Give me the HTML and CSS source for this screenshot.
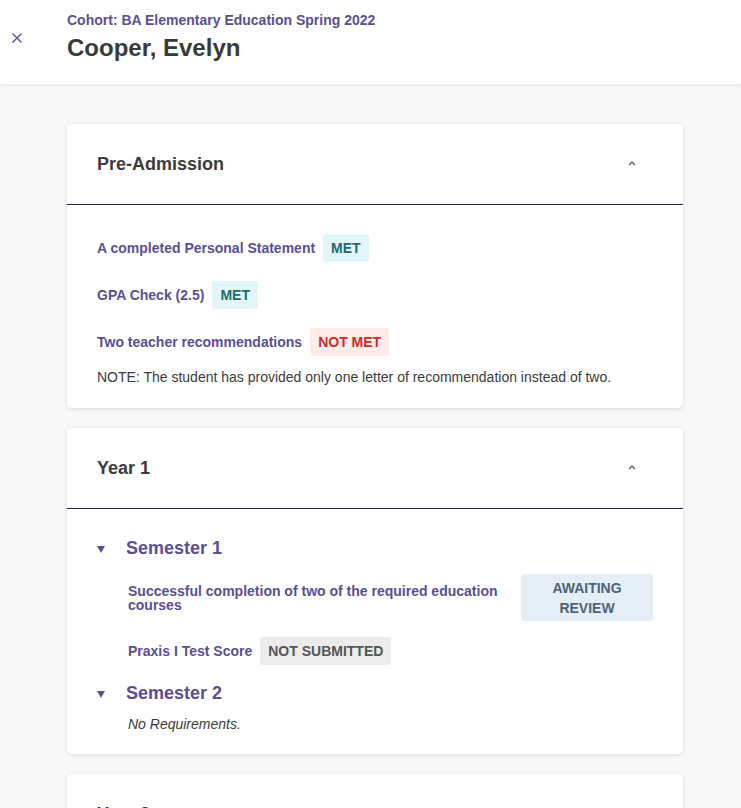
FILE: index.html
```html
<!DOCTYPE html>
<html>
<head>
<meta charset="utf-8">
<link rel="stylesheet" href="styles.css">
</head>
<body>
<header class="topbar">
  <button class="close" aria-label="Close">
    <svg width="12" height="12" viewBox="0 0 12 12"><path d="M1.5 1.5L10.5 10.5M10.5 1.5L1.5 10.5" stroke="#5b4f94" stroke-width="1.4" fill="none"/></svg>
  </button>
  <div class="titles">
    <div class="cohort">Cohort: BA Elementary Education Spring 2022</div>
    <h1 class="name">Cooper, Evelyn</h1>
  </div>
</header>
<main class="content">
  <section class="card">
    <div class="card-head">
      <h2>Pre-Admission</h2>
      <svg class="chev" width="10" height="6" viewBox="0 0 10 6"><path d="M2 5L5 2L8 5" stroke="#5b4f94" stroke-width="1.4" fill="none"/></svg>
    </div>
    <div class="card-body">
      <div class="req"><span class="label">A completed Personal Statement</span><span class="badge met">MET</span></div>
      <div class="req"><span class="label">GPA Check (2.5)</span><span class="badge met">MET</span></div>
      <div class="req"><span class="label">Two teacher recommendations</span><span class="badge notmet">NOT MET</span></div>
      <p class="note">NOTE: The student has provided only one letter of recommendation instead of two.</p>
    </div>
  </section>
  <section class="card">
    <div class="card-head">
      <h2>Year 1</h2>
      <svg class="chev" width="10" height="6" viewBox="0 0 10 6"><path d="M2 5L5 2L8 5" stroke="#5b4f94" stroke-width="1.4" fill="none"/></svg>
    </div>
    <div class="card-body sem-body">
      <div class="sem">
        <div class="sem-head"><span class="tri"></span><h3>Semester 1</h3></div>
        <div class="sem-items">
          <div class="sreq wide"><span class="label">Successful completion of two of the required education courses</span><span class="badge await">AWAITING REVIEW</span></div>
          <div class="sreq"><span class="label">Praxis I Test Score</span><span class="badge nosub">NOT SUBMITTED</span></div>
        </div>
      </div>
      <div class="sem">
        <div class="sem-head"><span class="tri"></span><h3>Semester 2</h3></div>
        <div class="sem-items">
          <p class="none">No Requirements.</p>
        </div>
      </div>
    </div>
  </section>
  <section class="card">
    <div class="card-head">
      <h2>Year 2</h2>
      <svg class="chev" width="10" height="6" viewBox="0 0 10 6"><path d="M2 5L5 2L8 5" stroke="#5b4f94" stroke-width="1.4" fill="none"/></svg>
    </div>
  </section>
</main>
</body>
</html>
```

FILE: styles.css
```css
* { box-sizing: border-box; }
html, body { margin: 0; padding: 0; }
body {
  background: #f8f8f8;
  font-family: "Liberation Sans", Arial, sans-serif;
  color: #3c3c3c;
  overflow: hidden;
  height: 808px;
}
.topbar {
  background: #fff;
  height: 84px;
  display: flex;
  align-items: flex-start;
  box-shadow: 0 1px 4px rgba(0,0,0,0.10);
  position: relative;
  z-index: 1;
}
.close {
  border: 0;
  background: none;
  padding: 0;
  margin: 32px 0 0 11px;
  width: 12px;
  height: 12px;
  display: flex;
}
.titles {
  margin-left: 44px;
  padding-top: 12px;
}
.cohort {
  font-size: 14px;
  font-weight: bold;
  color: #5b4f94;
  line-height: 17px;
}
.name {
  margin: 5px 0 0;
  font-size: 24px;
  line-height: 28px;
  font-weight: bold;
  color: #3a3a3a;
}
.content {
  padding: 40px 58px 0 67px;
  display: flex;
  flex-direction: column;
  gap: 20px;
}
.card {
  background: #fff;
  border-radius: 5px;
  box-shadow: 0 1px 4px rgba(0,0,0,0.12);
}
.card-head {
  height: 81px;
  border-bottom: 1px solid #2e1c4a;
  display: flex;
  align-items: center;
  justify-content: space-between;
  padding: 0 46px 0 30px;
}
.card-head h2 {
  margin: 0;
  font-size: 18px;
  font-weight: bold;
  color: #3c3c3c;
}
.chev { display: block; margin-top: -2px; }
.card-body {
  padding: 29px 30px 23px;
  display: flex;
  flex-direction: column;
}
.req {
  display: flex;
  align-items: center;
  gap: 8px;
  margin-bottom: 19px;
}
.req:nth-of-type(3) { margin-bottom: 13px; }
.label {
  font-size: 14px;
  font-weight: bold;
  color: #5b4f94;
}
.badge {
  font-size: 14px;
  font-weight: bold;
  padding: 5px 8px;
  border-radius: 3px;
  line-height: 18px;
}
.met { background: #e2f6f8; color: #1e6b6e; }
.notmet { background: #fdecea; color: #c62f2f; }
.await { background: #e5eef7; color: #4d6276; text-align: center; padding: 4px 10px 3px; width: 132px; flex-shrink: 0; line-height: 20px; }
.nosub { background: #ececec; color: #555; }
.note {
  margin: 0;
  font-size: 14px;
  color: #3c3c3c;
}
.sem-body { padding: 29px 30px 22px; }
.sem-head {
  display: flex;
  align-items: center;
}
.tri {
  width: 0; height: 0;
  border-left: 4px solid transparent;
  border-right: 4px solid transparent;
  border-top: 7px solid #5b4f94;
  margin: 2px 21px 0 0;
}
.sem-head h3 {
  margin: 0;
  font-size: 18px;
  font-weight: bold;
  color: #5b4f94;
}
.sem-items {
  padding-left: 31px;
}
.sem:first-child .sem-items { padding-top: 15px; padding-bottom: 18px; }
.sreq {
  display: flex;
  align-items: center;
  gap: 8px;
}
.sreq.wide {
  justify-content: space-between;
  gap: 10px;
  margin-bottom: 16px;
}
.sreq.wide .label { line-height: 14px; }
.none {
  margin: 12px 0 0;
  font-size: 14px;
  font-style: italic;
  color: #3c3c3c;
}
```
